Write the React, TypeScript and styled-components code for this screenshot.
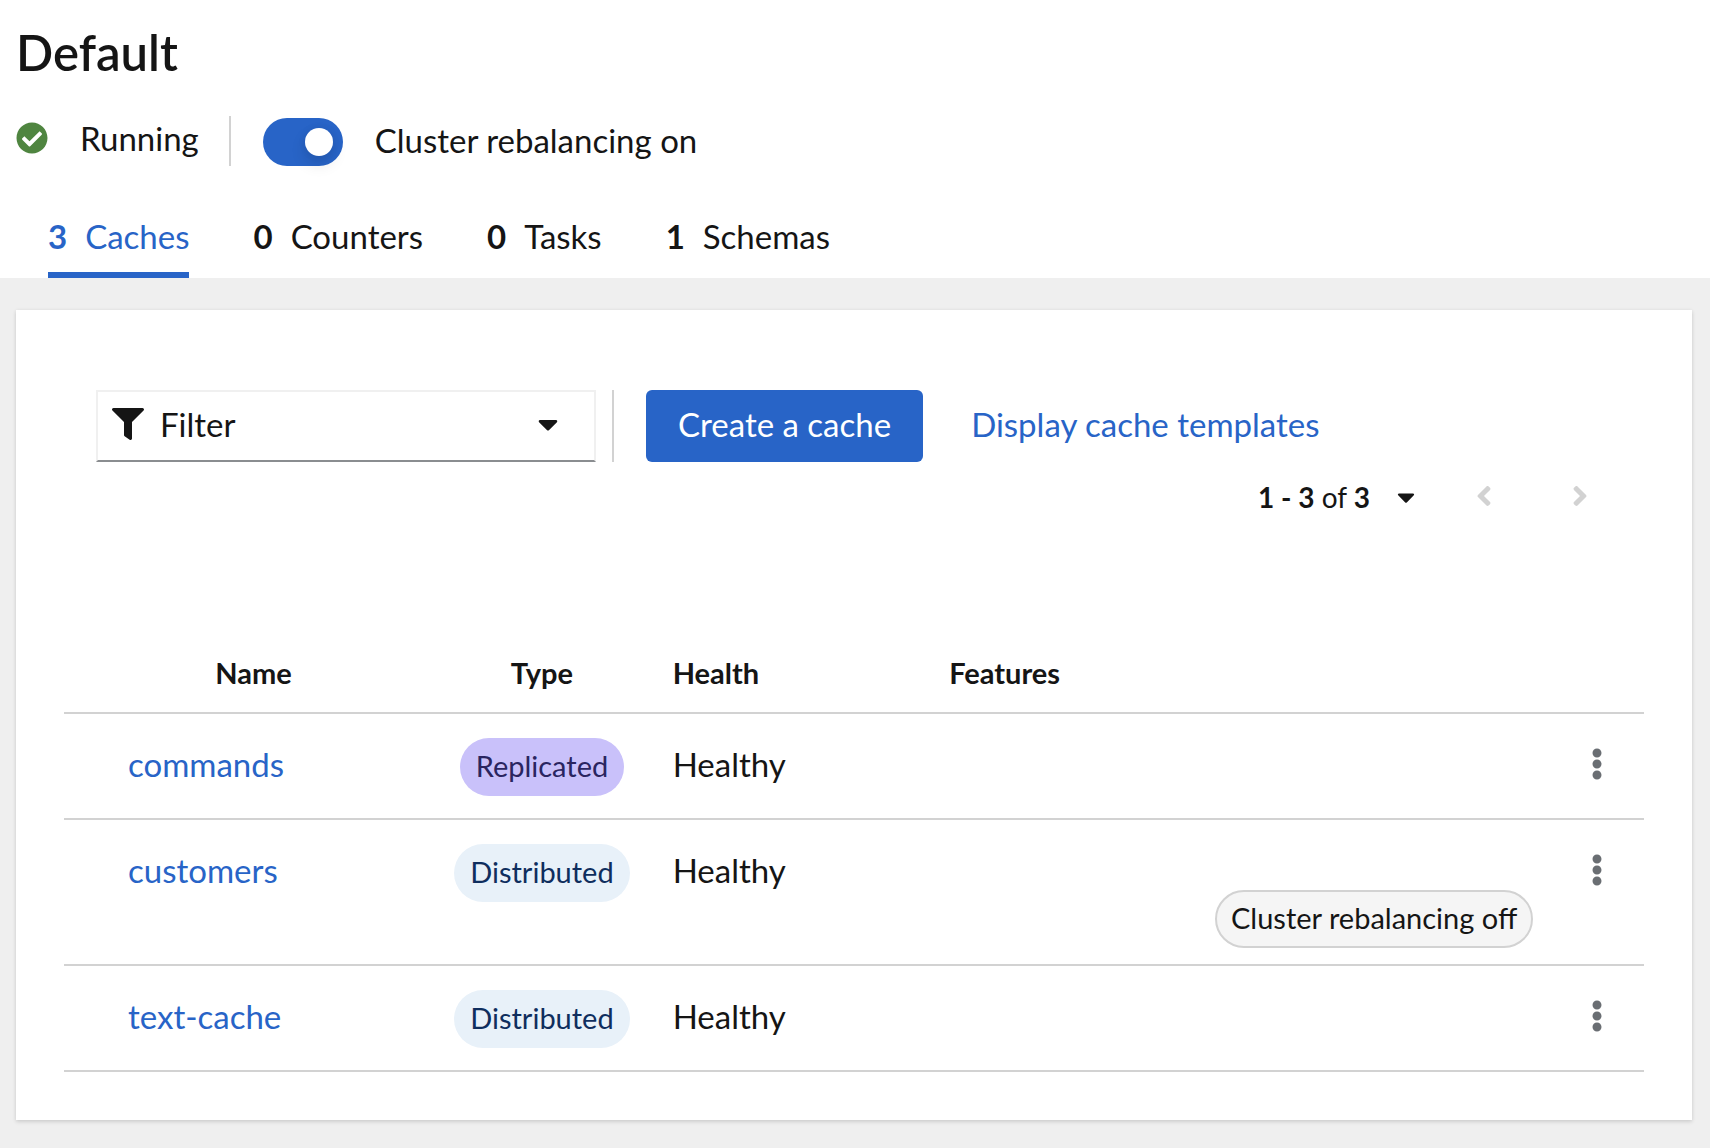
import React, { useState } from 'react';
import styled, { createGlobalStyle } from 'styled-components';
import {
  FaAngleLeft,
  FaAngleRight,
  FaCaretDown,
  FaCheckCircle,
  FaEllipsisV,
  FaFilter,
} from 'react-icons/fa';

const color = {
  text: '#151515',
  blue: '#2864c7',
  green: '#4f8540',
  line: '#d2d2d2',
  muted: '#6a6e73',
  page: '#efefef',
};

const GlobalStyle = createGlobalStyle`
  *, *::before, *::after { box-sizing: border-box; }
  body {
    margin: 0;
    background: ${color.page};
    color: ${color.text};
    font-family: Lato, "Open Sans", sans-serif;
    font-size: 33px;
    line-height: 48px;
  }
  button, select, input { font: inherit; color: inherit; }
  button { cursor: pointer; }
  svg { display: block; flex: none; }
`;

const Header = styled.header`
  background: #fff;
  padding: 22px 16px 0;
`;

const Title = styled.h1`
  margin: 0;
  font-size: 49px;
  line-height: 60px;
  font-weight: 600;
`;

const StatusBar = styled.div`
  display: flex;
  align-items: center;
  margin-top: 34px;
  height: 50px;
`;

const Status = styled.div`
  display: flex;
  align-items: center;
  gap: 32px;
  padding-bottom: 6px;
  color: ${color.text};

  svg { color: ${color.green}; }
`;

const Divider = styled.span<{ $left: number; $right: number }>`
  align-self: stretch;
  width: 2px;
  margin: 0 ${(p) => p.$right}px 0 ${(p) => p.$left}px;
  background: ${color.line};
`;

const SwitchLabel = styled.label`
  display: flex;
  align-items: center;
  gap: 32px;
  padding-top: 2px;
`;

const SwitchText = styled.span`
  padding-bottom: 4px;
`;

const Switch = styled.input`
  appearance: none;
  display: flex;
  align-items: center;
  width: 80px;
  height: 48px;
  margin: 0;
  padding: 0 10px;
  border-radius: 24px;
  background: #8a8d90;

  &::before {
    content: '';
    width: 28px;
    height: 28px;
    border-radius: 50%;
    background: #fff;
    box-shadow: 0 8px 16px rgba(3, 3, 3, 0.12), 0 0 8px rgba(3, 3, 3, 0.06);
  }

  &:checked {
    justify-content: flex-end;
    background: ${color.blue};
  }
`;

const Tabs = styled.div`
  display: flex;
  gap: 64px;
  margin-top: 32px;
  padding: 0 32px;
`;

const Tab = styled.button<{ $active: boolean }>`
  display: flex;
  gap: 18px;
  padding: 14px 0 12px;
  border: 0;
  border-bottom: 6px solid ${(p) => (p.$active ? color.blue : 'transparent')};
  background: none;
  color: ${(p) => (p.$active ? color.blue : color.text)};
`;

const Main = styled.main`
  padding: 32px 18px 28px 16px;
`;

const Card = styled.section`
  padding: 80px 48px 48px;
  background: #fff;
  box-shadow: 0 2px 4px rgba(3, 3, 3, 0.12), 0 0 4px rgba(3, 3, 3, 0.06);
`;

const Toolbar = styled.div`
  display: flex;
  align-items: center;
  height: 72px;
  padding: 0 32px;
`;

const FilterBox = styled.label`
  display: flex;
  align-items: center;
  width: 500px;
  height: 72px;
  padding: 0 30px 4px 14px;
  border: 2px solid #f0f0f0;
  border-bottom-color: #8a8d90;
`;

const FilterSelect = styled.select`
  appearance: none;
  flex: 1;
  height: 48px;
  margin: 0;
  padding: 0 16px;
  border: 0;
  background: none;
`;

const PrimaryButton = styled.button`
  height: 72px;
  padding: 0 32px 4px;
  border: 0;
  border-radius: 6px;
  background: ${color.blue};
  color: #fff;
`;

const Link = styled.a`
  color: ${color.blue};
  text-decoration: none;
`;

const TemplatesLink = styled(Link)`
  padding: 0 48px 4px;
`;

const Pagination = styled.nav`
  display: flex;
  align-items: center;
  justify-content: flex-end;
  gap: 32px;
  height: 72px;
  padding: 0 32px;
  font-size: 28px;
`;

const RangeButton = styled.button`
  display: flex;
  align-items: center;
  gap: 22px;
  padding: 0 0 2px;
  border: 0;
  background: none;
`;

const PageButton = styled.button`
  display: flex;
  align-items: center;
  justify-content: center;
  width: 64px;
  height: 48px;
  padding: 0 0 4px;
  border: 0;
  background: none;
  color: ${color.line};
`;

const Table = styled.table`
  width: 100%;
  margin-top: 94px;
  border-spacing: 0;
  table-layout: fixed;
`;

const Column = styled.col<{ $width: string }>`
  width: ${(p) => p.$width};
`;

const HeadCell = styled.th<{ $center?: boolean }>`
  padding: 24px 32px 18px;
  border-bottom: 2px solid ${color.line};
  font-size: 29px;
  line-height: 42px;
  font-weight: 700;
  text-align: ${(p) => (p.$center ? 'center' : 'left')};
`;

const Cell = styled.td<{ $pad?: string }>`
  padding: ${(p) => p.$pad ?? '24px 32px 16px'};
  border-bottom: 2px solid ${color.line};
  line-height: 52px;
  vertical-align: top;
`;

const labelColors = {
  Replicated: { background: '#c9c1fa', text: '#2a2560' },
  Distributed: { background: '#e8f1f9', text: '#0f2e5e' },
};

const Label = styled.span<{ $kind: keyof typeof labelColors }>`
  display: block;
  width: fit-content;
  margin: 0 auto 6px;
  padding: 7px 16px 9px;
  border-radius: 29px;
  background: ${(p) => labelColors[p.$kind].background};
  color: ${(p) => labelColors[p.$kind].text};
  font-size: 29px;
  line-height: 42px;
`;

const FeatureLabel = styled.span`
  display: block;
  width: fit-content;
  margin: 46px 0 0 auto;
  padding: 5px 14px 7px;
  border: 2px solid ${color.line};
  border-radius: 29px;
  background: #f5f5f5;
  font-size: 29px;
  line-height: 42px;
`;

const KebabButton = styled.button`
  display: flex;
  justify-content: center;
  width: 100%;
  padding: 10px 0;
  border: 0;
  background: none;
  color: ${color.muted};
`;

const tabs = [
  { count: 3, name: 'Caches' },
  { count: 0, name: 'Counters' },
  { count: 0, name: 'Tasks' },
  { count: 1, name: 'Schemas' },
];

interface Cache {
  name: string;
  type: keyof typeof labelColors;
  health: string;
  feature?: string;
}

const caches: Cache[] = [
  { name: 'commands', type: 'Replicated', health: 'Healthy' },
  { name: 'customers', type: 'Distributed', health: 'Healthy', feature: 'Cluster rebalancing off' },
  { name: 'text-cache', type: 'Distributed', health: 'Healthy' },
];

function CacheTable() {
  return (
    <Table>
      <colgroup>
        <Column $width="24%" />
        <Column $width="12.5%" />
        <Column $width="17.5%" />
        <Column $width="40%" />
        <Column $width="6%" />
      </colgroup>
      <thead>
        <tr>
          <HeadCell $center>Name</HeadCell>
          <HeadCell $center>Type</HeadCell>
          <HeadCell>Health</HeadCell>
          <HeadCell>Features</HeadCell>
          <HeadCell aria-label="Actions" />
        </tr>
      </thead>
      <tbody>
        {caches.map((cache) => (
          <tr key={cache.name}>
            <Cell $pad="24px 64px 16px">
              <Link href="#">{cache.name}</Link>
            </Cell>
            <Cell $pad="24px 0 16px">
              <Label $kind={cache.type}>{cache.type}</Label>
            </Cell>
            <Cell>{cache.health}</Cell>
            <Cell $pad="24px 16px 16px 32px">
              {cache.feature && <FeatureLabel>{cache.feature}</FeatureLabel>}
            </Cell>
            <Cell $pad="24px 0 16px">
              <KebabButton aria-label={`Actions for ${cache.name}`}>
                <FaEllipsisV size={32} />
              </KebabButton>
            </Cell>
          </tr>
        ))}
      </tbody>
    </Table>
  );
}

export default function App() {
  const [active, setActive] = useState('Caches');
  const [rebalancing, setRebalancing] = useState(true);

  return (
    <>
      <GlobalStyle />
      <Header>
        <Title>Default</Title>
        <StatusBar>
          <Status>
            <FaCheckCircle size={32} />
            Running
          </Status>
          <Divider $left={30} $right={32} />
          <SwitchLabel>
            <Switch
              type="checkbox"
              role="switch"
              checked={rebalancing}
              onChange={(e) => setRebalancing(e.target.checked)}
            />
            <SwitchText>Cluster rebalancing {rebalancing ? 'on' : 'off'}</SwitchText>
          </SwitchLabel>
        </StatusBar>
        <Tabs role="tablist">
          {tabs.map((tab) => (
            <Tab
              key={tab.name}
              role="tab"
              aria-selected={tab.name === active}
              $active={tab.name === active}
              onClick={() => setActive(tab.name)}
            >
              <strong>{tab.count}</strong>
              {tab.name}
            </Tab>
          ))}
        </Tabs>
      </Header>
      <Main>
        <Card>
          <Toolbar>
            <FilterBox>
              <FaFilter size={32} />
              <FilterSelect aria-label="Filter">
                <option>Filter</option>
              </FilterSelect>
              <FaCaretDown size={32} />
            </FilterBox>
            <Divider $left={16} $right={32} />
            <PrimaryButton>Create a cache</PrimaryButton>
            <TemplatesLink href="#">Display cache templates</TemplatesLink>
          </Toolbar>
          <Pagination aria-label="Pagination">
            <RangeButton>
              <span>
                <b>1 - 3</b> of <b>3</b>
              </span>
              <FaCaretDown size={28} />
            </RangeButton>
            <PageButton disabled aria-label="Previous page">
              <FaAngleLeft size={32} />
            </PageButton>
            <PageButton disabled aria-label="Next page">
              <FaAngleRight size={32} />
            </PageButton>
          </Pagination>
          <CacheTable />
        </Card>
      </Main>
    </>
  );
}
